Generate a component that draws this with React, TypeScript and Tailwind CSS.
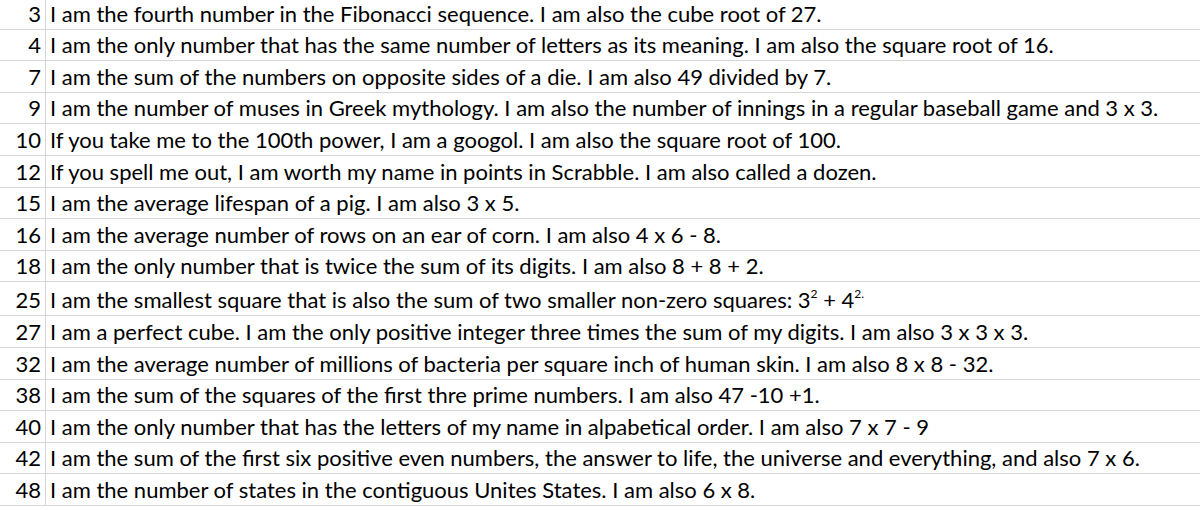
const rows: { n: number; text: React.ReactNode; tall?: boolean }[] = [
  { n: 3, text: 'I am the fourth number in the Fibonacci sequence. I am also the cube root of 27.' },
  { n: 4, text: 'I am the only number that has the same number of letters as its meaning. I am also the square root of 16.' },
  { n: 7, text: 'I am the sum of the numbers on opposite sides of a die. I am also 49 divided by 7.' },
  { n: 9, text: 'I am the number of muses in Greek mythology. I am also the number of innings in a regular baseball game and 3 x 3.' },
  { n: 10, text: 'If you take me to the 100th power, I am a googol. I am also the square root of 100.' },
  { n: 12, text: 'If you spell me out, I am worth my name in points in Scrabble. I am also called a dozen.' },
  { n: 15, text: 'I am the average lifespan of a pig. I am also 3 x 5.' },
  { n: 16, text: 'I am the average number of rows on an ear of corn. I am also 4 x 6 - 8.' },
  { n: 18, text: 'I am the only number that is twice the sum of its digits. I am also 8 + 8 + 2.' },
  {
    n: 25,
    tall: true,
    text: (
      <>
        I am the smallest square that is also the sum of two smaller non-zero squares: 3
        <span className="text-[12px] align-top relative -top-[1px]">2</span> + 4
        <span className="text-[12px] align-top relative -top-[1px]">2.</span>
      </>
    ),
  },
  { n: 27, text: 'I am a perfect cube. I am the only positive integer three times the sum of my digits. I am also 3 x 3 x 3.' },
  { n: 32, text: 'I am the average number of millions of bacteria per square inch of human skin. I am also 8 x 8 - 32.' },
  { n: 38, text: 'I am the sum of the squares of the first thre prime numbers. I am also 47 -10 +1.' },
  { n: 40, text: 'I am the only number that has the letters of my name in alpabetical order. I am also 7 x 7 - 9' },
  { n: 42, text: 'I am the sum of the first six positive even numbers, the answer to life, the universe and everything, and also 7 x 6.' },
  { n: 48, text: 'I am the number of states in the contiguous Unites States. I am also 6 x 8.' },
]

function App() {
  return (
    <div className="w-[1200px] h-[511px] overflow-hidden bg-white text-black text-[22px] leading-none" style={{ fontFamily: 'Lato, "Open Sans", sans-serif' }}>
      <div className="-mt-[2px]">
        {rows.map((r) => (
          <div key={r.n} className={`flex items-end border-b border-[#d6d6d6] ${r.tall ? 'h-[34px]' : 'h-[31.6px]'}`}>
            <div className="w-[46px] shrink-0 h-full flex items-end justify-end pr-[4px] pb-[4px] border-r border-[#d6d6d6]">
              {r.n}
            </div>
            <div className="pl-[4px] pb-[4px] whitespace-nowrap">{r.text}</div>
          </div>
        ))}
      </div>
    </div>
  )
}

export default App
